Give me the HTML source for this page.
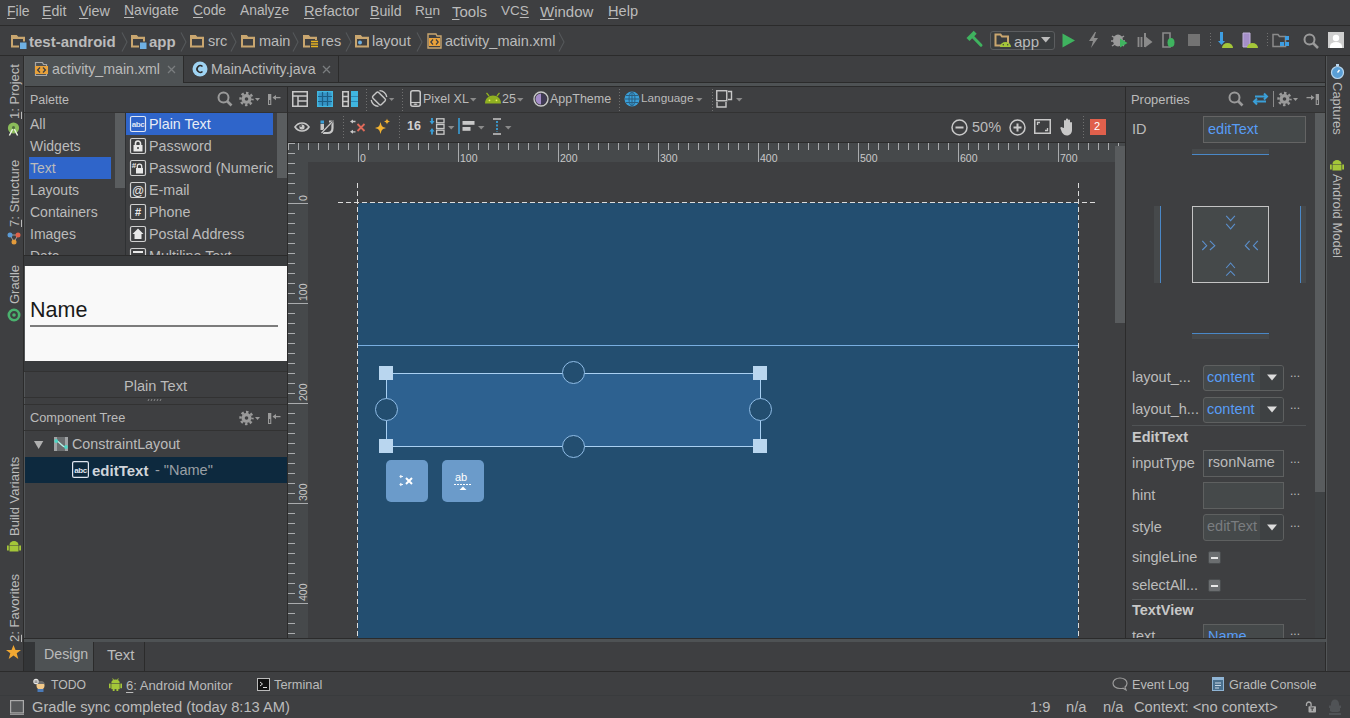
<!DOCTYPE html>
<html><head><meta charset="utf-8">
<style>
*{margin:0;padding:0;box-sizing:border-box}
html,body{width:1350px;height:718px;overflow:hidden;background:#3e3f41;font-family:"Liberation Sans",sans-serif;color:#bbbbbb}
.a{position:absolute}
.t{position:absolute;white-space:nowrap;line-height:1}
.hl{position:absolute;height:1px;background:#2b2b2b}
.vl{position:absolute;width:1px;background:#2b2b2b}
svg{position:absolute;overflow:visible}
u{text-decoration:underline;text-underline-offset:2px;text-decoration-thickness:1px}
</style></head><body>

<!-- ===== MENU BAR ===== -->
<div class="a" style="left:0;top:0;width:1350px;height:25px;background:#3e3f41"></div>
<div id="menu">
<div class="t" style="left:7px;top:4px;font-size:14.0px"><u>F</u>ile</div>
<div class="t" style="left:42px;top:4px;font-size:14.2px"><u>E</u>dit</div>
<div class="t" style="left:79px;top:4px;font-size:14.4px"><u>V</u>iew</div>
<div class="t" style="left:124px;top:4px;font-size:13.9px"><u>N</u>avigate</div>
<div class="t" style="left:193px;top:4px;font-size:13.8px"><u>C</u>ode</div>
<div class="t" style="left:240px;top:4px;font-size:13.8px">Analy<u>z</u>e</div>
<div class="t" style="left:304px;top:4px;font-size:14.6px"><u>R</u>efactor</div>
<div class="t" style="left:370px;top:4px;font-size:14.2px"><u>B</u>uild</div>
<div class="t" style="left:415px;top:4px;font-size:13.6px">R<u>u</u>n</div>
<div class="t" style="left:452px;top:4px;font-size:15.0px"><u>T</u>ools</div>
<div class="t" style="left:501px;top:4px;font-size:13.5px">VC<u>S</u></div>
<div class="t" style="left:540px;top:4px;font-size:15.0px"><u>W</u>indow</div>
<div class="t" style="left:608px;top:4px;font-size:14.6px"><u>H</u>elp</div>
</div>
<div class="hl" style="left:0;top:25px;width:1350px"></div>

<!-- ===== NAV BAR ===== -->
<div id="nav">
<!-- folder test-android -->
<svg style="left:10px;top:34px" width="17" height="15" viewBox="0 0 17 15"><path d="M1 1H6.8L8.3 2.8H15V13.5H1Z" fill="#c9a66f"/><rect x="3" y="5" width="10" height="6.5" fill="#3e3f41"/><rect x="9" y="7.5" width="7.5" height="7.5" fill="#3e3f41"/><rect x="10" y="8.5" width="6.5" height="6.5" fill="#6fb0e3"/></svg>
<div class="t" style="left:29px;top:34px;font-size:15px;font-weight:bold">test-android</div>
<svg style="left:121px;top:32px" width="7" height="20"><path d="M1 0.5L6 10L1 19.5" fill="none" stroke="#55585a" stroke-width="1.1"/></svg>
<svg style="left:130px;top:34px" width="17" height="15" viewBox="0 0 17 15"><path d="M1 1H6.8L8.3 2.8H15V13.5H1Z" fill="#c9a66f"/><rect x="3" y="5" width="10" height="6.5" fill="#3e3f41"/><rect x="9" y="7.5" width="7.5" height="7.5" fill="#3e3f41"/><rect x="10" y="8.5" width="6.5" height="6.5" fill="#6fb0e3"/></svg>
<div class="t" style="left:149px;top:34px;font-size:15px;font-weight:bold">app</div>
<svg style="left:180px;top:32px" width="7" height="20"><path d="M1 0.5L6 10L1 19.5" fill="none" stroke="#55585a" stroke-width="1.1"/></svg>
<svg style="left:189px;top:34px" width="17" height="15" viewBox="0 0 17 15"><path d="M1 1H6.8L8.3 2.8H15V13.5H1Z" fill="#c9a66f"/><rect x="3" y="5" width="10" height="6.5" fill="#3e3f41"/></svg>
<div class="t" style="left:208px;top:34px;font-size:14.5px">src</div>
<svg style="left:230px;top:32px" width="7" height="20"><path d="M1 0.5L6 10L1 19.5" fill="none" stroke="#55585a" stroke-width="1.1"/></svg>
<svg style="left:240px;top:34px" width="17" height="15" viewBox="0 0 17 15"><path d="M1 1H6.8L8.3 2.8H15V13.5H1Z" fill="#c9a66f"/><rect x="3" y="5" width="10" height="6.5" fill="#3e3f41"/></svg>
<div class="t" style="left:259px;top:34px;font-size:14.5px">main</div>
<svg style="left:292px;top:32px" width="7" height="20"><path d="M1 0.5L6 10L1 19.5" fill="none" stroke="#55585a" stroke-width="1.1"/></svg>
<svg style="left:302px;top:34px" width="17" height="15" viewBox="0 0 17 15"><path d="M1 1H6.8L8.3 2.8H15V13.5H1Z" fill="#c9a66f"/><rect x="3" y="5" width="10" height="6.5" fill="#3e3f41"/><rect x="8" y="6" width="8" height="9" fill="#3e3f41"/><path d="M9 7.5h7M9 10h7M9 12.5h7" stroke="#e6b422" stroke-width="1.6"/></svg>
<div class="t" style="left:321px;top:34px;font-size:14.5px">res</div>
<svg style="left:345px;top:32px" width="7" height="20"><path d="M1 0.5L6 10L1 19.5" fill="none" stroke="#55585a" stroke-width="1.1"/></svg>
<svg style="left:354px;top:34px" width="17" height="15" viewBox="0 0 17 15"><path d="M1 1H6.8L8.3 2.8H15V13.5H1Z" fill="#c9a66f"/><rect x="3" y="5" width="10" height="6.5" fill="#3e3f41"/><circle cx="6" cy="8.5" r="2" fill="#6fb0e3"/></svg>
<div class="t" style="left:372px;top:34px;font-size:14.5px">layout</div>
<svg style="left:416px;top:32px" width="7" height="20"><path d="M1 0.5L6 10L1 19.5" fill="none" stroke="#55585a" stroke-width="1.1"/></svg>
<svg style="left:427px;top:33px" width="15" height="16" viewBox="0 0 15 16"><path d="M1 1h8l1 2h4v12h-13z" fill="#3e3f41" stroke="#c9a66f" stroke-width="1.4"/><rect x="2" y="5" width="11" height="8" fill="#e9a23b"/><path d="M6 6.5L3.8 9L6 11.5M9 6.5L11.2 9L9 11.5" fill="none" stroke="#3e3f41" stroke-width="1.2"/></svg>
<div class="t" style="left:445px;top:34px;font-size:14.5px">activity_main.xml</div>
<svg style="left:558px;top:32px" width="7" height="20"><path d="M1 0.5L6 10L1 19.5" fill="none" stroke="#55585a" stroke-width="1.1"/></svg>

<!-- right toolbar -->
<svg style="left:966px;top:31px" width="18" height="17" viewBox="0 0 18 17"><path d="M2 8.5L9.2 1.3" stroke="#3fb35f" stroke-width="4.2"/><path d="M6 5L15 14.2" stroke="#3fb35f" stroke-width="3" stroke-linecap="round"/></svg>
<div class="a" style="left:990px;top:31px;width:65px;height:19px;border:1px solid #5b5d5f;border-radius:3px;background:#3a3d3f"></div>
<svg style="left:994px;top:33px" width="18" height="15" viewBox="0 0 18 15"><path d="M1.5 1.5h5l1.5 2h6v9h-12.5z" fill="none" stroke="#c9a66f" stroke-width="2"/><path d="M6 14a5 4.5 0 0 1 11 0z" fill="#a4c639"/><circle cx="9.3" cy="11.8" r="0.7" fill="#3e3f41"/><circle cx="13.7" cy="11.8" r="0.7" fill="#3e3f41"/></svg>
<div class="t" style="left:1014px;top:34px;font-size:15px">app</div>
<svg style="left:1041px;top:37px" width="10" height="6"><path d="M0 0h9.5L4.75 5.5z" fill="#bbbbbb"/></svg>
<svg style="left:1062px;top:33px" width="14" height="15"><path d="M0.5 0.5L13 7.5L0.5 14.5z" fill="#3fb35f"/></svg>
<svg style="left:1088px;top:32px" width="11" height="16"><path d="M7 0L1 9h4l-2 7l7-10h-4l2-6z" fill="#8c8c8c"/></svg>
<svg style="left:1111px;top:32px" width="17" height="16" viewBox="0 0 17 16"><ellipse cx="7" cy="8.5" rx="5" ry="6" fill="#9a9a9a"/><path d="M1 4l3 2M13 4l-3 2M0 9h3M14 9h-3M1 14l3-2M13 14l-3-2" stroke="#9a9a9a" stroke-width="1.5"/><path d="M9 6.5L16.5 11L9 15.5z" fill="#3fb35f"/></svg>
<svg style="left:1137px;top:33px" width="16" height="15" viewBox="0 0 16 15"><path d="M1.5 4v10M4.5 4v10" stroke="#8a8a8a" stroke-width="1.8"/><path d="M7 0h2v14h-2z" fill="#8a8a8a"/><path d="M8 3L15.5 9L8 14.5z" fill="#8a8a8a"/></svg>
<svg style="left:1162px;top:32px" width="14" height="16" viewBox="0 0 14 16"><path d="M1 1h7v14h-7z" fill="none" stroke="#8a8a8a" stroke-width="1.6"/><ellipse cx="9" cy="10.5" rx="3.5" ry="4.5" fill="#3fb35f"/></svg>
<div class="a" style="left:1188px;top:34px;width:12px;height:12px;background:#737373"></div>
<div class="a" style="left:1210px;top:33px;width:1px;height:15px;background:repeating-linear-gradient(to bottom,#707070 0 1px,transparent 1px 3px)"></div>
<svg style="left:1217px;top:32px" width="16" height="16" viewBox="0 0 16 16"><path d="M3 0h3v9h2l-3.5 4L1 9h2z" fill="#3e9ee2"/><path d="M5 16a5.5 5 0 0 1 11 0z" fill="#a4c639"/></svg>
<svg style="left:1242px;top:32px" width="16" height="16" viewBox="0 0 16 16"><path d="M1 1h7v14h-7z" fill="#a58fc9" stroke="#c1b3dc" stroke-width="1"/><path d="M5 16a5.5 5 0 0 1 11 0z" fill="#a4c639"/></svg>
<div class="a" style="left:1267px;top:33px;width:1px;height:15px;background:repeating-linear-gradient(to bottom,#707070 0 1px,transparent 1px 3px)"></div>
<svg style="left:1272px;top:33px" width="18" height="15" viewBox="0 0 18 15"><path d="M1 1.5h5l1.5 2h6v10h-12.5z" fill="none" stroke="#8a8a8a" stroke-width="1.5"/><rect x="13" y="3" width="4" height="4" fill="#3e9ee2"/><rect x="8" y="9" width="4" height="4" fill="#3e9ee2"/><rect x="13" y="9" width="4" height="4" fill="#3e9ee2"/></svg>
<svg style="left:1303px;top:33px" width="16" height="16" viewBox="0 0 16 16"><circle cx="6.5" cy="6.5" r="5" fill="none" stroke="#9a9a9a" stroke-width="2"/><path d="M10 10L15 15" stroke="#9a9a9a" stroke-width="2.5"/></svg>
<svg style="left:1328px;top:32px" width="16" height="16" viewBox="0 0 16 16"><rect width="16" height="16" fill="#cfcfcf"/><circle cx="8" cy="6" r="3.2" fill="#fff"/><path d="M2 16v-2a6 4 0 0 1 12 0v2z" fill="#fff"/></svg>
</div>
<div class="hl" style="left:0;top:55px;width:1350px"></div>

<!-- ===== TAB ROW ===== -->
<div id="tabs">
<div class="a" style="left:24px;top:82px;width:1302px;height:4px;background:#4e5254"></div>
<div class="hl" style="left:183px;top:82px;width:1143px;background:#2b2b2b"></div>
<div class="a" style="left:24px;top:56px;width:159px;height:27px;background:#4e5254"></div>
<div class="a" style="left:183px;top:56px;width:156px;height:27px;background:#3e3f41;border-left:1px solid #2b2b2b;border-right:1px solid #2b2b2b;border-bottom:1px solid #2b2b2b"></div>
<svg style="left:34px;top:61px" width="15" height="16" viewBox="0 0 15 16"><path d="M1.5 1.5h7l1 2h3v11h-11z" fill="none" stroke="#a8a8a8" stroke-width="1.2"/><rect x="1" y="5" width="13" height="8" fill="#e9a23b"/><path d="M6 6.5L3.6 9L6 11.5M9 6.5L11.4 9L9 11.5" fill="none" stroke="#3e3f41" stroke-width="1.3"/></svg>
<div class="t" style="left:52px;top:62px;font-size:14.2px">activity_main.xml</div>
<svg style="left:167px;top:65px" width="9" height="9"><path d="M1 1L8 8M8 1L1 8" stroke="#7a7d7f" stroke-width="1.3"/></svg>
<svg style="left:192px;top:61px" width="16" height="16" viewBox="0 0 16 16"><circle cx="8" cy="8" r="7.5" fill="#9fd3f2"/><path d="M10.5 5.5a3.3 3.3 0 1 0 0 5" fill="none" stroke="#2b2b2b" stroke-width="1.6"/></svg>
<div class="t" style="left:211px;top:62px;font-size:14.2px">MainActivity.java</div>
<svg style="left:322px;top:65px" width="9" height="9"><path d="M1 1L8 8M8 1L1 8" stroke="#7a7d7f" stroke-width="1.3"/></svg>
<div class="hl" style="left:24px;top:86px;width:1302px;background:#2b2b2b"></div>
</div>

<!-- ===== LEFT STRIP ===== -->
<div id="lstrip">
<div class="vl" style="left:23px;top:56px;height:616px;background:#2b2b2b"></div><div class="vl" style="left:24px;top:56px;height:616px;background:#535658"></div>
<div class="t" style="left:8px;top:119px;font-size:13px;transform:rotate(-90deg);transform-origin:0 0"><u>1</u>: Project</div>
<svg style="left:7px;top:121px" width="14" height="16" viewBox="0 0 14 16"><circle cx="6.5" cy="7" r="5.6" fill="#8bbd5a"/><circle cx="6.5" cy="6.5" r="1.5" fill="#4f6b40"/><path d="M5.6 8.2L2.4 14.5M7.4 8.2L10.6 14.5" stroke="#eef3e6" stroke-width="1.4"/></svg>
<div class="t" style="left:8px;top:227px;font-size:13px;transform:rotate(-90deg);transform-origin:0 0"><u>7</u>: Structure</div>
<svg style="left:7px;top:231px" width="14" height="14" viewBox="0 0 14 14"><path d="M3 4L11 4L7 11z" fill="none" stroke="#9a9a9a" stroke-width="1"/><circle cx="3" cy="4" r="2.5" fill="#5b9bd5"/><circle cx="11" cy="4" r="2.5" fill="#e0624a"/><circle cx="7" cy="11" r="2.5" fill="#e39b3b"/></svg>
<div class="t" style="left:8px;top:304px;font-size:13px;transform:rotate(-90deg);transform-origin:0 0">Gradle</div>
<svg style="left:7px;top:308px" width="14" height="14" viewBox="0 0 14 14"><circle cx="7" cy="7" r="5.2" fill="none" stroke="#4ab16e" stroke-width="2.6"/><circle cx="7" cy="7" r="1.8" fill="#4ab16e"/></svg>
<div class="t" style="left:8px;top:536px;font-size:13px;transform:rotate(-90deg);transform-origin:0 0">Build Variants</div>
<svg style="left:7px;top:539px" width="14" height="14" viewBox="0 0 14 14"><path d="M2.5 6a4.5 4 0 0 1 9 0z" fill="#a4c639"/><rect x="2.5" y="6.5" width="9" height="6" fill="#a4c639"/><rect x="0" y="6.5" width="1.8" height="5" fill="#a4c639"/><rect x="12.2" y="6.5" width="1.8" height="5" fill="#a4c639"/></svg>
<div class="t" style="left:8px;top:642px;font-size:13px;transform:rotate(-90deg);transform-origin:0 0"><u>2</u>: Favorites</div>
<svg style="left:6px;top:645px" width="15" height="14" viewBox="0 0 15 14"><path d="M7.5 0L9.5 5H15L10.7 8.3L12.3 14L7.5 10.5L2.7 14L4.3 8.3L0 5H5.5z" fill="#f0a732"/></svg>
</div>

<!-- ===== PALETTE ===== -->
<div id="palette">
<div class="vl" style="left:287px;top:87px;height:553px;background:#2b2b2b"></div>
<div class="t" style="left:30px;top:94px;font-size:12.5px">Palette</div>
<svg style="left:217px;top:91px" width="16" height="16" viewBox="0 0 16 16"><circle cx="6.5" cy="6.5" r="5" fill="none" stroke="#9a9a9a" stroke-width="2"/><path d="M10 10L14.5 14.5" stroke="#9a9a9a" stroke-width="2.6"/></svg>
<svg style="left:239px;top:91px" width="22" height="16" viewBox="0 0 22 16"><g transform="translate(7.5 8)"><circle r="5" fill="#9a9a9a"/><circle r="6" fill="none" stroke="#9a9a9a" stroke-width="2.4" stroke-dasharray="2.5 2.2124" stroke-dashoffset="1.25"/><circle r="1.8" fill="#3e3f41"/></g><path d="M16 7h5l-2.5 3z" fill="#9a9a9a"/></svg>
<svg style="left:268px;top:92px" width="14" height="14" viewBox="0 0 14 14"><rect x="0" y="2" width="3.3" height="11" fill="#9a9a9a"/><rect x="1.1" y="8" width="1.1" height="4" fill="#3e3f41"/><path d="M5.5 5.6h7" stroke="#9a9a9a" stroke-width="1.3"/><path d="M4.5 5.6L8 3V8.2z" fill="#9a9a9a"/></svg>
<div class="hl" style="left:24px;top:112px;width:263px;background:#323232"></div>
<!-- categories -->
<div class="a" style="left:29px;top:157px;width:82px;height:22px;background:#2f65ca"></div>
<div class="t" style="left:30px;top:117px;font-size:14px">All</div>
<div class="t" style="left:30px;top:139px;font-size:14px">Widgets</div>
<div class="t" style="left:30px;top:161px;font-size:14px">Text</div>
<div class="t" style="left:30px;top:183px;font-size:14px">Layouts</div>
<div class="t" style="left:30px;top:205px;font-size:14px">Containers</div>
<div class="t" style="left:30px;top:227px;font-size:14px">Images</div>
<div class="a" style="left:25px;top:113px;width:100px;height:142px;overflow:hidden"><div class="t" style="left:5px;top:136px;font-size:14px">Date</div></div>
<div class="a" style="left:115px;top:113px;width:10px;height:75px;background:#5a5d5f"></div>
<div class="vl" style="left:125px;top:113px;height:142px;background:#2f3133"></div>
<!-- items -->
<div class="a" style="left:126px;top:113px;width:147px;height:22px;background:#2f65ca"></div>
<div class="a" style="left:115px;top:113px;width:172px;height:142px;overflow:hidden">
<svg style="left:15px;top:3px" width="16" height="16" viewBox="0 0 16 16"><rect x="0.5" y="0.5" width="15" height="15" rx="1.5" fill="none" stroke="#dfe6f5" stroke-width="1.2"/><text x="8" y="11" font-size="8" font-weight="bold" letter-spacing="-0.4" font-family="Liberation Sans" fill="#dfe6f5" text-anchor="middle">abc</text></svg>
<div class="t" style="left:34px;top:4px;font-size:14.3px;color:#e8ecf5">Plain Text</div>
<svg style="left:15px;top:25px" width="16" height="16" viewBox="0 0 16 16"><rect x="0.5" y="0.5" width="15" height="15" rx="1.5" fill="none" stroke="#d0d0d0" stroke-width="1.2"/><rect x="3.5" y="7" width="9" height="6.5" fill="#e8e8e8"/><circle cx="8" cy="10" r="1" fill="#3e3f41"/><path d="M5.5 7V5.5a2.5 2.5 0 0 1 5 0V7" fill="none" stroke="#e8e8e8" stroke-width="1.6"/></svg>
<div class="t" style="left:34px;top:26px;font-size:14.3px">Password</div>
<svg style="left:15px;top:47px" width="16" height="16" viewBox="0 0 16 16"><rect x="0.5" y="0.5" width="15" height="15" rx="1.5" fill="none" stroke="#d0d0d0" stroke-width="1.2"/><rect x="6" y="8" width="7" height="5.5" fill="#e8e8e8"/><path d="M7.3 8V6.3a2.2 2.2 0 0 1 4.4 0V8" fill="none" stroke="#e8e8e8" stroke-width="1.3"/><text x="4" y="7.5" font-size="8" font-family="Liberation Sans" font-weight="bold" fill="#e8e8e8" text-anchor="middle">#</text></svg>
<div class="t" style="left:34px;top:48px;font-size:14.3px">Password (Numeric)</div>
<svg style="left:15px;top:69px" width="16" height="16" viewBox="0 0 16 16"><rect x="0.5" y="0.5" width="15" height="15" rx="1.5" fill="none" stroke="#d0d0d0" stroke-width="1.2"/><text x="8" y="12.5" font-size="12" font-family="Liberation Sans" fill="#e8e8e8" text-anchor="middle">@</text></svg>
<div class="t" style="left:34px;top:70px;font-size:14.3px">E-mail</div>
<svg style="left:15px;top:91px" width="16" height="16" viewBox="0 0 16 16"><rect x="0.5" y="0.5" width="15" height="15" rx="1.5" fill="none" stroke="#d0d0d0" stroke-width="1.2"/><text x="8" y="12" font-size="11" font-family="Liberation Sans" font-weight="bold" fill="#e8e8e8" text-anchor="middle">#</text></svg>
<div class="t" style="left:34px;top:92px;font-size:14.3px">Phone</div>
<svg style="left:15px;top:113px" width="16" height="16" viewBox="0 0 16 16"><rect x="0.5" y="0.5" width="15" height="15" rx="1.5" fill="none" stroke="#d0d0d0" stroke-width="1.2"/><path d="M8 2.5L2.5 8H4.5V13H11.5V8H13.5z" fill="#e8e8e8"/></svg>
<div class="t" style="left:34px;top:114px;font-size:14.3px">Postal Address</div>
<svg style="left:15px;top:135px" width="16" height="16" viewBox="0 0 16 16"><rect x="0.5" y="0.5" width="15" height="15" rx="1.5" fill="none" stroke="#d0d0d0" stroke-width="1.2"/><rect x="3" y="3" width="10" height="2" fill="#e8e8e8"/></svg>
<div class="t" style="left:34px;top:136px;font-size:14.3px">Multiline Text</div>
<div class="a" style="left:158px;top:0;width:14px;height:142px;background:#3e3f41"></div>
<div class="a" style="left:162px;top:0;width:10px;height:65px;background:#5a5d5f"></div>
</div>
<div class="hl" style="left:24px;top:255px;width:263px;background:#2b2b2b"></div>
<div class="a" style="left:24px;top:256px;width:263px;height:10px;background:#393b3d"></div>
<!-- preview -->
<div class="a" style="left:25px;top:266px;width:262px;height:95px;background:#f9f9f9"></div>
<div class="t" style="left:30px;top:300px;font-size:21.5px;color:#1a1a1a">Name</div>
<div class="a" style="left:30px;top:325px;width:248px;height:2px;background:#7c7c7c"></div>
<div class="a" style="left:24px;top:361px;width:263px;height:10px;background:#393b3d"></div>
<div class="hl" style="left:24px;top:371px;width:263px;background:#323232"></div>
<div class="t" style="left:124px;top:379px;font-size:14.6px">Plain Text</div>
<div class="hl" style="left:24px;top:397px;width:263px;background:#323232"></div>
<svg style="left:147px;top:398px" width="16" height="4"><path d="M1 3L2 1M4 3L5 1M7 3L8 1M10 3L11 1M13 3L14 1" stroke="#9a9a9a" stroke-width="0.8"/></svg>
<div class="hl" style="left:24px;top:404px;width:263px;background:#323232"></div>
<!-- component tree -->
<div class="t" style="left:30px;top:412px;font-size:12.8px">Component Tree</div>
<svg style="left:239px;top:410px" width="22" height="16" viewBox="0 0 22 16"><g transform="translate(7.5 8)"><circle r="5" fill="#9a9a9a"/><circle r="6" fill="none" stroke="#9a9a9a" stroke-width="2.4" stroke-dasharray="2.5 2.2124" stroke-dashoffset="1.25"/><circle r="1.8" fill="#3e3f41"/></g><path d="M16 7h5l-2.5 3z" fill="#9a9a9a"/></svg>
<svg style="left:268px;top:411px" width="14" height="14" viewBox="0 0 14 14"><rect x="0" y="2" width="3.3" height="11" fill="#9a9a9a"/><rect x="1.1" y="8" width="1.1" height="4" fill="#3e3f41"/><path d="M5.5 5.6h7" stroke="#9a9a9a" stroke-width="1.3"/><path d="M4.5 5.6L8 3V8.2z" fill="#9a9a9a"/></svg>
<div class="hl" style="left:24px;top:430px;width:263px;background:#323232"></div>
<svg style="left:34px;top:441px" width="10" height="8"><path d="M0 0h9.3L4.65 8z" fill="#b0b0b0"/></svg>
<svg style="left:54px;top:437px" width="14" height="14" viewBox="0 0 14 14"><rect width="14" height="14" fill="#6b6e70"/><rect width="3" height="14" fill="#a0a3a5"/><rect x="11" width="3" height="14" fill="#a0a3a5"/><path d="M2.2 4C6 4 7 10 12 10" fill="none" stroke="#b8efe6" stroke-width="1.3"/><circle cx="2.2" cy="4" r="1.9" fill="#4fd6c4"/><circle cx="12" cy="10" r="1.9" fill="#4fd6c4"/></svg>
<div class="t" style="left:72px;top:437px;font-size:14.3px">ConstraintLayout</div>
<div class="a" style="left:25px;top:457px;width:262px;height:26px;background:#0d293e"></div>
<svg style="left:72px;top:461px" width="17" height="17" viewBox="0 0 17 17"><rect x="0.6" y="0.6" width="15.8" height="15.8" rx="1.5" fill="none" stroke="#dfe6f0" stroke-width="1.2"/><text x="8.5" y="11.5" font-size="8" font-weight="bold" letter-spacing="-0.4" font-family="Liberation Sans" fill="#dfe6f0" text-anchor="middle">abc</text></svg>
<div class="t" style="left:92px;top:463px;font-size:15px;font-weight:bold;color:#d0d4da">editText</div>
<div class="t" style="left:155px;top:463px;font-size:14.5px;color:#9aa0a6">- "Name"</div>
</div>

<!-- ===== DESIGN ===== -->
<div id="design">
<div class="hl" style="left:288px;top:112px;width:837px;background:#323232"></div>
<!-- toolbar row 1 -->
<svg style="left:292px;top:91px" width="16" height="16" viewBox="0 0 16 16"><rect x="0.75" y="0.75" width="14.5" height="14.5" fill="none" stroke="#c8c8c8" stroke-width="1.5"/><path d="M1 5h14M6 5v10M6 10h9" stroke="#c8c8c8" stroke-width="1.5"/></svg>
<svg style="left:317px;top:91px" width="16" height="16" viewBox="0 0 16 16"><rect x="0" y="0" width="16" height="16" fill="#3592c4"/><rect x="0.75" y="0.75" width="14.5" height="14.5" fill="none" stroke="#40b6e0" stroke-width="1.5"/><path d="M5.5 1v14M10.5 1v14M1 5.5h14M1 10.5h14" stroke="#1b5f86" stroke-width="1.2"/></svg>
<svg style="left:342px;top:91px" width="16" height="16" viewBox="0 0 16 16"><rect x="0.75" y="0.75" width="5.5" height="14.5" fill="none" stroke="#c8c8c8" stroke-width="1.5"/><path d="M1 5.5h5M1 10.5h5" stroke="#c8c8c8" stroke-width="1.3"/><rect x="9" y="0" width="7" height="16" fill="#40b6e0"/><path d="M9 5.5h7M9 10.5h7" stroke="#2a88b8" stroke-width="1.2"/></svg>
<div class="a" style="left:366px;top:89px;width:1px;height:22px;background:repeating-linear-gradient(to bottom,#707070 0 1px,transparent 1px 3px)"></div>
<svg style="left:371px;top:90px" width="24" height="18" viewBox="0 0 24 18"><g transform="rotate(-45 8 8.5)"><rect x="4" y="2.5" width="8" height="12" rx="1.5" fill="none" stroke="#c8c8c8" stroke-width="1.4"/></g><path d="M8.5 0.7A8 8 0 0 1 15.8 7M7.5 16.3A8 8 0 0 1 0.2 10" fill="none" stroke="#c8c8c8" stroke-width="1.3"/><path d="M18 8h5.3l-2.65 3z" fill="#8a8a8a"/></svg>
<div class="a" style="left:402px;top:89px;width:1px;height:22px;background:repeating-linear-gradient(to bottom,#707070 0 1px,transparent 1px 3px)"></div>
<svg style="left:410px;top:90px" width="11" height="17" viewBox="0 0 11 17"><rect x="0.75" y="0.75" width="9.5" height="15.5" rx="2" fill="none" stroke="#c8c8c8" stroke-width="1.5"/><path d="M1 12.5h9" stroke="#c8c8c8" stroke-width="1.1"/><ellipse cx="5.5" cy="14.3" rx="2" ry="0.8" fill="#c8c8c8"/></svg>
<div class="t" style="left:423px;top:93px;font-size:12.5px">Pixel XL</div>
<svg style="left:470px;top:98px" width="7" height="4"><path d="M0 0h6.5L3.25 3.5z" fill="#8a8a8a"/></svg>
<svg style="left:484px;top:92px" width="18" height="12" viewBox="0 0 18 12"><path d="M2.5 0.8L5 4M15.5 0.8L13 4" stroke="#8fb021" stroke-width="1.3"/><path d="M1 11.5C1 6.5 4.5 3.5 9 3.5S17 6.5 17 11.5z" fill="#8fb021"/><circle cx="5.5" cy="8.3" r="0.9" fill="#f0f060"/><circle cx="12.5" cy="8.3" r="0.9" fill="#f0f060"/></svg>
<div class="t" style="left:502px;top:93px;font-size:12.5px">25</div>
<svg style="left:517px;top:98px" width="7" height="4"><path d="M0 0h6.5L3.25 3.5z" fill="#8a8a8a"/></svg>
<svg style="left:533px;top:91px" width="16" height="16" viewBox="0 0 16 16"><circle cx="8" cy="8" r="7" fill="none" stroke="#c8c8c8" stroke-width="1.4"/><path d="M8 2.5a5.5 5.5 0 0 0 0 11z" fill="#a48cc8"/><path d="M8 2.5a5.5 5.5 0 0 1 0 11z" fill="#403a55"/></svg>
<div class="t" style="left:550px;top:93px;font-size:12.5px">AppTheme</div>
<div class="a" style="left:619px;top:89px;width:1px;height:22px;background:repeating-linear-gradient(to bottom,#707070 0 1px,transparent 1px 3px)"></div>
<svg style="left:624px;top:91px" width="16" height="16" viewBox="0 0 16 16"><circle cx="8" cy="8" r="7.5" fill="#3a9fd8"/><g fill="none" stroke="#2b5e80" stroke-width="1"><ellipse cx="8" cy="8" rx="3" ry="7"/><path d="M1 8h14M2 4.5h12M2 11.5h12M8 1v14"/></g></svg>
<div class="t" style="left:641px;top:93px;font-size:11.8px">Language</div>
<svg style="left:696px;top:98px" width="7" height="4"><path d="M0 0h6.5L3.25 3.5z" fill="#8a8a8a"/></svg>
<div class="a" style="left:712px;top:89px;width:1px;height:22px;background:repeating-linear-gradient(to bottom,#707070 0 1px,transparent 1px 3px)"></div>
<svg style="left:716px;top:90px" width="18" height="18" viewBox="0 0 18 18"><rect x="0.75" y="0.75" width="10" height="10" fill="none" stroke="#c8c8c8" stroke-width="1.4"/><path d="M12 1.5h3.5v8h-3.5M1 12v5h9v-5" fill="none" stroke="#c8c8c8" stroke-width="1.4"/></svg>
<svg style="left:736px;top:98px" width="7" height="4"><path d="M0 0h6.5L3.25 3.5z" fill="#8a8a8a"/></svg>
<!-- toolbar row 2 -->
<svg style="left:294px;top:122px" width="16" height="10" viewBox="0 0 16 10"><path d="M1 5C3 2 5.5 1 8 1s5 1 7 4C13 8 10.5 9 8 9S3 8 1 5z" fill="none" stroke="#c8c8c8" stroke-width="1.6"/><circle cx="8" cy="5" r="2.6" fill="#c8c8c8"/><circle cx="7" cy="4" r="0.9" fill="#3e3f41"/></svg>
<svg style="left:320px;top:120px" width="14" height="14" viewBox="0 0 14 14"><rect x="0.5" y="0.5" width="3.5" height="3" fill="#3a9fd8"/><path d="M0.5 4h3.5v6h-3.5z" fill="#c8c8c8"/><path d="M9 1.5h3.5V8c0 3-2 5-5 5H3" fill="none" stroke="#c8c8c8" stroke-width="2.2"/><path d="M1 13.5L13 1" stroke="#3e3f41" stroke-width="2.2"/><path d="M1.5 13L12.5 1.5" stroke="#c8c8c8" stroke-width="1.2"/></svg>
<div class="a" style="left:343px;top:116px;width:1px;height:22px;background:repeating-linear-gradient(to bottom,#707070 0 1px,transparent 1px 3px)"></div>
<svg style="left:349px;top:119px" width="17" height="15" viewBox="0 0 17 15"><path d="M1 2.5L4 0.5V4.5zM1 12.8L4 10.8V14.8z" fill="#c8c8c8"/><path d="M3.5 2.5H6.5M3.5 12.8H6.5" stroke="#c8c8c8" stroke-width="1.3"/><path d="M8.5 5L15.5 12M15.5 5L8.5 12" stroke="#e06a5a" stroke-width="1.8"/></svg>
<svg style="left:374px;top:118px" width="17" height="17" viewBox="0 0 17 17"><path d="M6.5 4C7.5 8 8 9 12 10C8 11 7.5 12 6.5 16C5.5 12 5 11 1 10C5 9 5.5 8 6.5 4z" fill="#f2b230"/><path d="M13 0.5C13.5 2.5 14 3 16 3.5C14 4 13.5 4.5 13 6.5C12.5 4.5 12 4 10 3.5C12 3 12.5 2.5 13 0.5z" fill="#f2b230"/></svg>
<div class="a" style="left:399px;top:116px;width:1px;height:22px;background:repeating-linear-gradient(to bottom,#707070 0 1px,transparent 1px 3px)"></div>
<div class="t" style="left:407px;top:120px;font-size:12.5px;font-weight:bold;color:#d0d0d0">16</div>
<svg style="left:429px;top:118px" width="16" height="17" viewBox="0 0 16 17"><path d="M0.5 3H5.5L3 6.5zM0.5 13.5H5.5L3 10z" fill="#3a9fd8"/><path d="M3 0v3.5M3 13v3.5" stroke="#3a9fd8" stroke-width="1.8"/><rect x="7.6" y="0.8" width="7.4" height="4" fill="none" stroke="#c8c8c8" stroke-width="1.3"/><rect x="7.6" y="6.5" width="7.4" height="4" fill="none" stroke="#c8c8c8" stroke-width="1.3"/><rect x="7.6" y="12.2" width="7.4" height="4" fill="none" stroke="#c8c8c8" stroke-width="1.3"/></svg>
<svg style="left:448px;top:126px" width="7" height="4"><path d="M0 0h6.5L3.25 3.5z" fill="#8a8a8a"/></svg>
<svg style="left:458px;top:118px" width="17" height="17" viewBox="0 0 17 17"><path d="M1 0v16" stroke="#3a9fd8" stroke-width="1.6"/><rect x="4.5" y="3" width="12" height="3.8" fill="#c8c8c8"/><rect x="4.5" y="9" width="8" height="3.8" fill="#c8c8c8"/></svg>
<svg style="left:478px;top:126px" width="7" height="4"><path d="M0 0h6.5L3.25 3.5z" fill="#8a8a8a"/></svg>
<svg style="left:492px;top:118px" width="10" height="17" viewBox="0 0 10 17"><path d="M1 1h8M1 16h8" stroke="#c8c8c8" stroke-width="1.6"/><path d="M5 3v11" stroke="#3a9fd8" stroke-width="1.8" stroke-dasharray="2 1.5"/></svg>
<svg style="left:505px;top:126px" width="7" height="4"><path d="M0 0h6.5L3.25 3.5z" fill="#8a8a8a"/></svg>
<svg style="left:951px;top:119px" width="17" height="17" viewBox="0 0 17 17"><circle cx="8.5" cy="8.5" r="7.5" fill="none" stroke="#c8c8c8" stroke-width="1.5"/><path d="M4.5 8.5h8" stroke="#c8c8c8" stroke-width="2"/></svg>
<div class="t" style="left:972px;top:120px;font-size:14.5px">50%</div>
<svg style="left:1009px;top:119px" width="17" height="17" viewBox="0 0 17 17"><circle cx="8.5" cy="8.5" r="7.5" fill="none" stroke="#c8c8c8" stroke-width="1.5"/><path d="M4.5 8.5h8M8.5 4.5v8" stroke="#c8c8c8" stroke-width="2"/></svg>
<svg style="left:1034px;top:119px" width="17" height="16" viewBox="0 0 17 16"><rect x="0.75" y="0.75" width="15.5" height="13.5" fill="none" stroke="#c8c8c8" stroke-width="1.5"/><path d="M3.5 6V3.5H6M13.5 9v2.5H11" fill="none" stroke="#c8c8c8" stroke-width="1.3"/></svg>
<svg style="left:1060px;top:118px" width="15" height="18" viewBox="0 0 15 18"><path d="M4 10V3a1 1 0 0 1 2 0V8V1.5a1 1 0 0 1 2 0V8V2.5a1 1 0 0 1 2 0V8.5V5a1 1 0 0 1 2 0V12c0 3-2 5.5-5 5.5c-2.5 0-3.5-1-5-3L0.5 10.5c-.5-.8.5-1.8 1.3-1.2z" fill="#c8c8c8"/></svg>
<div class="a" style="left:1083px;top:116px;width:1px;height:22px;background:repeating-linear-gradient(to bottom,#707070 0 1px,transparent 1px 3px)"></div>
<div class="a" style="left:1090px;top:119px;width:16px;height:16px;background:#e0604c"></div>
<div class="t" style="left:1094px;top:121px;font-size:11px;color:#fff">2</div>
<div class="hl" style="left:288px;top:142px;width:837px;background:#2b2b2b"></div>
<!-- rulers -->
<div class="a" style="left:288px;top:143px;width:837px;height:19px;background:#46494b"></div>
<div class="a" style="left:288px;top:143px;width:20px;height:497px;background:#46494b"></div>
<div class="a" style="left:288px;top:143px;width:7px;height:1px;background:#a9abad"></div>
<div class="a" style="left:288px;top:143px;width:1px;height:7px;background:#a9abad"></div>
<div class="a" style="left:298px;top:143px;width:1px;height:7px;background:#a9abad"></div>
<div class="a" style="left:308px;top:143px;width:1px;height:7px;background:#a9abad"></div>
<div class="a" style="left:318px;top:143px;width:1px;height:7px;background:#a9abad"></div>
<div class="a" style="left:328px;top:143px;width:1px;height:7px;background:#a9abad"></div>
<div class="a" style="left:338px;top:143px;width:1px;height:7px;background:#a9abad"></div>
<div class="a" style="left:348px;top:143px;width:1px;height:7px;background:#a9abad"></div>
<div class="a" style="left:358px;top:143px;width:1px;height:19px;background:#a9abad"></div>
<div class="t" style="left:360px;top:153px;font-size:10.5px;color:#c8c8c8">0</div>
<div class="a" style="left:368px;top:143px;width:1px;height:7px;background:#a9abad"></div>
<div class="a" style="left:378px;top:143px;width:1px;height:7px;background:#a9abad"></div>
<div class="a" style="left:388px;top:143px;width:1px;height:7px;background:#a9abad"></div>
<div class="a" style="left:398px;top:143px;width:1px;height:7px;background:#a9abad"></div>
<div class="a" style="left:408px;top:143px;width:1px;height:7px;background:#a9abad"></div>
<div class="a" style="left:418px;top:143px;width:1px;height:7px;background:#a9abad"></div>
<div class="a" style="left:428px;top:143px;width:1px;height:7px;background:#a9abad"></div>
<div class="a" style="left:438px;top:143px;width:1px;height:7px;background:#a9abad"></div>
<div class="a" style="left:448px;top:143px;width:1px;height:7px;background:#a9abad"></div>
<div class="a" style="left:458px;top:143px;width:1px;height:19px;background:#a9abad"></div>
<div class="t" style="left:460px;top:153px;font-size:10.5px;color:#c8c8c8">100</div>
<div class="a" style="left:468px;top:143px;width:1px;height:7px;background:#a9abad"></div>
<div class="a" style="left:478px;top:143px;width:1px;height:7px;background:#a9abad"></div>
<div class="a" style="left:488px;top:143px;width:1px;height:7px;background:#a9abad"></div>
<div class="a" style="left:498px;top:143px;width:1px;height:7px;background:#a9abad"></div>
<div class="a" style="left:508px;top:143px;width:1px;height:7px;background:#a9abad"></div>
<div class="a" style="left:518px;top:143px;width:1px;height:7px;background:#a9abad"></div>
<div class="a" style="left:528px;top:143px;width:1px;height:7px;background:#a9abad"></div>
<div class="a" style="left:538px;top:143px;width:1px;height:7px;background:#a9abad"></div>
<div class="a" style="left:548px;top:143px;width:1px;height:7px;background:#a9abad"></div>
<div class="a" style="left:558px;top:143px;width:1px;height:19px;background:#a9abad"></div>
<div class="t" style="left:560px;top:153px;font-size:10.5px;color:#c8c8c8">200</div>
<div class="a" style="left:568px;top:143px;width:1px;height:7px;background:#a9abad"></div>
<div class="a" style="left:578px;top:143px;width:1px;height:7px;background:#a9abad"></div>
<div class="a" style="left:588px;top:143px;width:1px;height:7px;background:#a9abad"></div>
<div class="a" style="left:598px;top:143px;width:1px;height:7px;background:#a9abad"></div>
<div class="a" style="left:608px;top:143px;width:1px;height:7px;background:#a9abad"></div>
<div class="a" style="left:618px;top:143px;width:1px;height:7px;background:#a9abad"></div>
<div class="a" style="left:628px;top:143px;width:1px;height:7px;background:#a9abad"></div>
<div class="a" style="left:638px;top:143px;width:1px;height:7px;background:#a9abad"></div>
<div class="a" style="left:648px;top:143px;width:1px;height:7px;background:#a9abad"></div>
<div class="a" style="left:658px;top:143px;width:1px;height:19px;background:#a9abad"></div>
<div class="t" style="left:660px;top:153px;font-size:10.5px;color:#c8c8c8">300</div>
<div class="a" style="left:668px;top:143px;width:1px;height:7px;background:#a9abad"></div>
<div class="a" style="left:678px;top:143px;width:1px;height:7px;background:#a9abad"></div>
<div class="a" style="left:688px;top:143px;width:1px;height:7px;background:#a9abad"></div>
<div class="a" style="left:698px;top:143px;width:1px;height:7px;background:#a9abad"></div>
<div class="a" style="left:708px;top:143px;width:1px;height:7px;background:#a9abad"></div>
<div class="a" style="left:718px;top:143px;width:1px;height:7px;background:#a9abad"></div>
<div class="a" style="left:728px;top:143px;width:1px;height:7px;background:#a9abad"></div>
<div class="a" style="left:738px;top:143px;width:1px;height:7px;background:#a9abad"></div>
<div class="a" style="left:748px;top:143px;width:1px;height:7px;background:#a9abad"></div>
<div class="a" style="left:758px;top:143px;width:1px;height:19px;background:#a9abad"></div>
<div class="t" style="left:760px;top:153px;font-size:10.5px;color:#c8c8c8">400</div>
<div class="a" style="left:768px;top:143px;width:1px;height:7px;background:#a9abad"></div>
<div class="a" style="left:778px;top:143px;width:1px;height:7px;background:#a9abad"></div>
<div class="a" style="left:788px;top:143px;width:1px;height:7px;background:#a9abad"></div>
<div class="a" style="left:798px;top:143px;width:1px;height:7px;background:#a9abad"></div>
<div class="a" style="left:808px;top:143px;width:1px;height:7px;background:#a9abad"></div>
<div class="a" style="left:818px;top:143px;width:1px;height:7px;background:#a9abad"></div>
<div class="a" style="left:828px;top:143px;width:1px;height:7px;background:#a9abad"></div>
<div class="a" style="left:838px;top:143px;width:1px;height:7px;background:#a9abad"></div>
<div class="a" style="left:848px;top:143px;width:1px;height:7px;background:#a9abad"></div>
<div class="a" style="left:858px;top:143px;width:1px;height:19px;background:#a9abad"></div>
<div class="t" style="left:860px;top:153px;font-size:10.5px;color:#c8c8c8">500</div>
<div class="a" style="left:868px;top:143px;width:1px;height:7px;background:#a9abad"></div>
<div class="a" style="left:878px;top:143px;width:1px;height:7px;background:#a9abad"></div>
<div class="a" style="left:888px;top:143px;width:1px;height:7px;background:#a9abad"></div>
<div class="a" style="left:898px;top:143px;width:1px;height:7px;background:#a9abad"></div>
<div class="a" style="left:908px;top:143px;width:1px;height:7px;background:#a9abad"></div>
<div class="a" style="left:918px;top:143px;width:1px;height:7px;background:#a9abad"></div>
<div class="a" style="left:928px;top:143px;width:1px;height:7px;background:#a9abad"></div>
<div class="a" style="left:938px;top:143px;width:1px;height:7px;background:#a9abad"></div>
<div class="a" style="left:948px;top:143px;width:1px;height:7px;background:#a9abad"></div>
<div class="a" style="left:958px;top:143px;width:1px;height:19px;background:#a9abad"></div>
<div class="t" style="left:960px;top:153px;font-size:10.5px;color:#c8c8c8">600</div>
<div class="a" style="left:968px;top:143px;width:1px;height:7px;background:#a9abad"></div>
<div class="a" style="left:978px;top:143px;width:1px;height:7px;background:#a9abad"></div>
<div class="a" style="left:988px;top:143px;width:1px;height:7px;background:#a9abad"></div>
<div class="a" style="left:998px;top:143px;width:1px;height:7px;background:#a9abad"></div>
<div class="a" style="left:1008px;top:143px;width:1px;height:7px;background:#a9abad"></div>
<div class="a" style="left:1018px;top:143px;width:1px;height:7px;background:#a9abad"></div>
<div class="a" style="left:1028px;top:143px;width:1px;height:7px;background:#a9abad"></div>
<div class="a" style="left:1038px;top:143px;width:1px;height:7px;background:#a9abad"></div>
<div class="a" style="left:1048px;top:143px;width:1px;height:7px;background:#a9abad"></div>
<div class="a" style="left:1058px;top:143px;width:1px;height:19px;background:#a9abad"></div>
<div class="t" style="left:1060px;top:153px;font-size:10.5px;color:#c8c8c8">700</div>
<div class="a" style="left:1068px;top:143px;width:1px;height:7px;background:#a9abad"></div>
<div class="a" style="left:1078px;top:143px;width:1px;height:7px;background:#a9abad"></div>
<div class="a" style="left:1088px;top:143px;width:1px;height:7px;background:#a9abad"></div>
<div class="a" style="left:1098px;top:143px;width:1px;height:7px;background:#a9abad"></div>
<div class="a" style="left:1108px;top:143px;width:1px;height:7px;background:#a9abad"></div>
<div class="a" style="left:288px;top:153px;width:7px;height:1px;background:#a9abad"></div>
<div class="a" style="left:288px;top:163px;width:7px;height:1px;background:#a9abad"></div>
<div class="a" style="left:288px;top:173px;width:7px;height:1px;background:#a9abad"></div>
<div class="a" style="left:288px;top:183px;width:7px;height:1px;background:#a9abad"></div>
<div class="a" style="left:288px;top:193px;width:7px;height:1px;background:#a9abad"></div>
<div class="a" style="left:288px;top:203px;width:20px;height:1px;background:#a9abad"></div>
<div class="t" style="left:298px;top:201px;font-size:10.5px;color:#c8c8c8;transform:rotate(-90deg);transform-origin:0 0">0</div>
<div class="a" style="left:288px;top:213px;width:7px;height:1px;background:#a9abad"></div>
<div class="a" style="left:288px;top:223px;width:7px;height:1px;background:#a9abad"></div>
<div class="a" style="left:288px;top:233px;width:7px;height:1px;background:#a9abad"></div>
<div class="a" style="left:288px;top:243px;width:7px;height:1px;background:#a9abad"></div>
<div class="a" style="left:288px;top:253px;width:7px;height:1px;background:#a9abad"></div>
<div class="a" style="left:288px;top:263px;width:7px;height:1px;background:#a9abad"></div>
<div class="a" style="left:288px;top:273px;width:7px;height:1px;background:#a9abad"></div>
<div class="a" style="left:288px;top:283px;width:7px;height:1px;background:#a9abad"></div>
<div class="a" style="left:288px;top:293px;width:7px;height:1px;background:#a9abad"></div>
<div class="a" style="left:288px;top:303px;width:20px;height:1px;background:#a9abad"></div>
<div class="t" style="left:298px;top:301px;font-size:10.5px;color:#c8c8c8;transform:rotate(-90deg);transform-origin:0 0">100</div>
<div class="a" style="left:288px;top:313px;width:7px;height:1px;background:#a9abad"></div>
<div class="a" style="left:288px;top:323px;width:7px;height:1px;background:#a9abad"></div>
<div class="a" style="left:288px;top:333px;width:7px;height:1px;background:#a9abad"></div>
<div class="a" style="left:288px;top:343px;width:7px;height:1px;background:#a9abad"></div>
<div class="a" style="left:288px;top:353px;width:7px;height:1px;background:#a9abad"></div>
<div class="a" style="left:288px;top:363px;width:7px;height:1px;background:#a9abad"></div>
<div class="a" style="left:288px;top:373px;width:7px;height:1px;background:#a9abad"></div>
<div class="a" style="left:288px;top:383px;width:7px;height:1px;background:#a9abad"></div>
<div class="a" style="left:288px;top:393px;width:7px;height:1px;background:#a9abad"></div>
<div class="a" style="left:288px;top:403px;width:20px;height:1px;background:#a9abad"></div>
<div class="t" style="left:298px;top:401px;font-size:10.5px;color:#c8c8c8;transform:rotate(-90deg);transform-origin:0 0">200</div>
<div class="a" style="left:288px;top:413px;width:7px;height:1px;background:#a9abad"></div>
<div class="a" style="left:288px;top:423px;width:7px;height:1px;background:#a9abad"></div>
<div class="a" style="left:288px;top:433px;width:7px;height:1px;background:#a9abad"></div>
<div class="a" style="left:288px;top:443px;width:7px;height:1px;background:#a9abad"></div>
<div class="a" style="left:288px;top:453px;width:7px;height:1px;background:#a9abad"></div>
<div class="a" style="left:288px;top:463px;width:7px;height:1px;background:#a9abad"></div>
<div class="a" style="left:288px;top:473px;width:7px;height:1px;background:#a9abad"></div>
<div class="a" style="left:288px;top:483px;width:7px;height:1px;background:#a9abad"></div>
<div class="a" style="left:288px;top:493px;width:7px;height:1px;background:#a9abad"></div>
<div class="a" style="left:288px;top:503px;width:20px;height:1px;background:#a9abad"></div>
<div class="t" style="left:298px;top:501px;font-size:10.5px;color:#c8c8c8;transform:rotate(-90deg);transform-origin:0 0">300</div>
<div class="a" style="left:288px;top:513px;width:7px;height:1px;background:#a9abad"></div>
<div class="a" style="left:288px;top:523px;width:7px;height:1px;background:#a9abad"></div>
<div class="a" style="left:288px;top:533px;width:7px;height:1px;background:#a9abad"></div>
<div class="a" style="left:288px;top:543px;width:7px;height:1px;background:#a9abad"></div>
<div class="a" style="left:288px;top:553px;width:7px;height:1px;background:#a9abad"></div>
<div class="a" style="left:288px;top:563px;width:7px;height:1px;background:#a9abad"></div>
<div class="a" style="left:288px;top:573px;width:7px;height:1px;background:#a9abad"></div>
<div class="a" style="left:288px;top:583px;width:7px;height:1px;background:#a9abad"></div>
<div class="a" style="left:288px;top:593px;width:7px;height:1px;background:#a9abad"></div>
<div class="a" style="left:288px;top:603px;width:20px;height:1px;background:#a9abad"></div>
<div class="t" style="left:298px;top:601px;font-size:10.5px;color:#c8c8c8;transform:rotate(-90deg);transform-origin:0 0">400</div>
<div class="a" style="left:288px;top:613px;width:7px;height:1px;background:#a9abad"></div>
<div class="a" style="left:288px;top:623px;width:7px;height:1px;background:#a9abad"></div>
<div class="a" style="left:288px;top:633px;width:7px;height:1px;background:#a9abad"></div>
<div class="a" style="left:1118px;top:143px;width:1px;height:7px;background:#a9abad"></div>
<!-- canvas -->
<div class="a" style="left:358px;top:203px;width:720px;height:435px;background:#234e70;border-top-left-radius:3px"></div>
<div class="a" style="left:358px;top:345px;width:720px;height:1px;background:#78aee0"></div>
<svg style="left:0;top:0" width="1350" height="638"><g stroke="#dcdcdc" stroke-width="1" stroke-dasharray="5 3"><path d="M357.5 183V638M1078.5 183V638M338 202.5H1096"/></g></svg>


<div class="a" style="left:386px;top:373px;width:375px;height:74px;background:#2d6190;border:1px solid #a9d0f2"></div>
<div class="a" style="left:562px;top:361px;width:23px;height:23px;border-radius:50%;background:#234e70;border:1px solid #8fbce6"></div>
<div class="a" style="left:562px;top:435px;width:23px;height:23px;border-radius:50%;background:#234e70;border:1px solid #8fbce6"></div>
<div class="a" style="left:375px;top:398px;width:23px;height:23px;border-radius:50%;background:#234e70;border:1px solid #8fbce6"></div>
<div class="a" style="left:749px;top:398px;width:23px;height:23px;border-radius:50%;background:#234e70;border:1px solid #8fbce6"></div>
<div class="a" style="left:379px;top:366px;width:14px;height:14px;background:#b9d6ef"></div>
<div class="a" style="left:753px;top:366px;width:14px;height:14px;background:#b9d6ef"></div>
<div class="a" style="left:379px;top:439px;width:14px;height:14px;background:#b9d6ef"></div>
<div class="a" style="left:753px;top:439px;width:14px;height:14px;background:#b9d6ef"></div>
<div class="a" style="left:386px;top:460px;width:42px;height:42px;border-radius:5px;background:#6b9bca"></div>
<div class="a" style="left:442px;top:460px;width:42px;height:42px;border-radius:5px;background:#6b9bca"></div>
<svg style="left:399px;top:473px" width="16" height="16" viewBox="0 0 16 16"><path d="M4 3.5H1M2.3 2.2L1 3.5L2.3 4.8M4 11.5H1M2.3 10.2L1 11.5L2.3 12.8" fill="none" stroke="#eef4fa" stroke-width="1.1"/><path d="M7 5L13 11M13 5L7 11" stroke="#ffffff" stroke-width="2"/></svg>
<div class="t" style="left:455px;top:472px;font-size:11px;color:#fff">ab</div>
<svg style="left:454px;top:483px" width="18" height="8"><path d="M0 1.5h18" stroke="#fff" stroke-width="1" stroke-dasharray="2 1"/><path d="M5.5 7L9 3.5L12.5 7z" fill="#fff"/></svg>
<!-- scrollbar -->
<div class="a" style="left:1115px;top:146px;width:10px;height:177px;background:#595c5e"></div>
<div class="vl" style="left:1125px;top:87px;height:553px;background:#2b2b2b"></div>
</div>


<!-- ===== PROPERTIES ===== -->
<div id="props">
<div class="t" style="left:1131px;top:94px;font-size:12.9px">Properties</div>
<svg style="left:1228px;top:91px" width="16" height="16" viewBox="0 0 16 16"><circle cx="6.5" cy="6.5" r="5" fill="none" stroke="#9a9a9a" stroke-width="2"/><path d="M10 10L14.5 14.5" stroke="#9a9a9a" stroke-width="2.6"/></svg>
<svg style="left:1252px;top:92px" width="17" height="14" viewBox="0 0 17 14"><path d="M3 4.5h12M12 1.5l3 3l-3 3M14 9.5H2M5 6.5l-3 3l3 3" fill="none" stroke="#3a9fd8" stroke-width="2"/></svg>
<div class="a" style="left:1273px;top:91px;width:1px;height:16px;background:#8a8a8a"></div>
<svg style="left:1277px;top:91px" width="22" height="16" viewBox="0 0 22 16"><g transform="translate(7.5 8)"><circle r="5" fill="#9a9a9a"/><circle r="6" fill="none" stroke="#9a9a9a" stroke-width="2.4" stroke-dasharray="2.5 2.2124" stroke-dashoffset="1.25"/><circle r="1.8" fill="#3e3f41"/></g><path d="M16 7h5l-2.5 3z" fill="#9a9a9a"/></svg>
<svg style="left:1305px;top:92px" width="14" height="14" viewBox="0 0 14 14"><rect x="10.7" y="2" width="3.3" height="11" fill="#9a9a9a"/><rect x="11.8" y="8" width="1.1" height="4" fill="#3e3f41"/><path d="M1.5 5.6h7" stroke="#9a9a9a" stroke-width="1.3"/><path d="M9.5 5.6L6 3V8.2z" fill="#9a9a9a"/></svg>
<div class="hl" style="left:1126px;top:112px;width:200px;background:#323232"></div>
<div class="a" style="left:1315px;top:113px;width:10px;height:526px;background:#3f4244"></div>
<div class="a" style="left:1315px;top:113px;width:10px;height:379px;background:#595c5e"></div>
<div class="t" style="left:1132px;top:122px;font-size:14.5px">ID</div>
<div class="a" style="left:1203px;top:116px;width:103px;height:27px;background:#45494a;border:1px solid #646464"></div>
<div class="t" style="left:1208px;top:122px;font-size:14.5px;color:#589df6">editText</div>
<!-- constraint widget -->
<div class="a" style="left:1192px;top:149px;width:77px;height:6px;background:#46494b"></div>
<div class="a" style="left:1192px;top:154px;width:77px;height:1px;background:#4a88c7"></div>
<div class="a" style="left:1192px;top:333px;width:77px;height:6px;background:#46494b"></div>
<div class="a" style="left:1192px;top:333px;width:77px;height:1px;background:#4a88c7"></div>
<div class="a" style="left:1154px;top:206px;width:7px;height:77px;background:#46494b"></div>
<div class="a" style="left:1160px;top:206px;width:1px;height:77px;background:#4a88c7"></div>
<div class="a" style="left:1300px;top:206px;width:6px;height:77px;background:#46494b"></div>
<div class="a" style="left:1300px;top:206px;width:1px;height:77px;background:#4a88c7"></div>
<div class="a" style="left:1192px;top:206px;width:77px;height:77px;background:#45494a;border:1px solid #c4c4c4"></div>
<svg style="left:1192px;top:206px" width="77" height="77"><g fill="none" stroke="#5b8fcc" stroke-width="1.1"><path d="M34.2 9.8L38.6 14.7L42.9 9.8M34.2 17.9L38.6 22.8L42.9 17.9"/><path d="M34.2 62L38.6 57L42.9 62M34.2 69.6L38.6 65.2L42.9 69.6"/><path d="M10.3 34.8L14.7 39.7L10.3 44M17.9 34.8L22.8 39.7L17.9 44"/><path d="M57.6 34.8L53.3 39.7L57.6 44M65.8 34.8L61.4 39.7L65.8 44"/></g></svg>
<!-- rows -->
<div class="t" style="left:1132px;top:370px;font-size:14.5px">layout_...</div>
<div class="a" style="left:1203px;top:365px;width:81px;height:26px;background:#45494a;border:1px solid #5e6060;border-radius:3px;overflow:hidden"><div class="a" style="left:56px;top:0;width:25px;height:26px;background:#3e4143"></div></div>
<div class="t" style="left:1207px;top:370px;font-size:14.5px;color:#589df6">content</div>
<svg style="left:1267px;top:374px" width="10" height="7"><path d="M0 0.5h10L5 6.5z" fill="#dcdcdc"/></svg>
<div class="t" style="left:1290px;top:367px;font-size:12px">...</div>
<div class="t" style="left:1132px;top:402px;font-size:14.5px">layout_h...</div>
<div class="a" style="left:1203px;top:397px;width:81px;height:26px;background:#45494a;border:1px solid #5e6060;border-radius:3px;overflow:hidden"><div class="a" style="left:56px;top:0;width:25px;height:26px;background:#3e4143"></div></div>
<div class="t" style="left:1207px;top:402px;font-size:14.5px;color:#589df6">content</div>
<svg style="left:1267px;top:406px" width="10" height="7"><path d="M0 0.5h10L5 6.5z" fill="#dcdcdc"/></svg>
<div class="t" style="left:1290px;top:399px;font-size:12px">...</div>
<div class="a" style="left:1132px;top:425px;width:174px;height:1px;background:#505355"></div>
<div class="t" style="left:1132px;top:430px;font-size:14.5px;font-weight:bold;color:#c8c8c8">EditText</div>
<div class="t" style="left:1132px;top:456px;font-size:14.5px">inputType</div>
<div class="a" style="left:1203px;top:450px;width:81px;height:27px;background:#3f4244;border:1px solid #5e6060"></div>
<div class="a" style="left:1204px;top:451px;width:79px;height:25px;overflow:hidden"><div class="t" style="left:4px;top:4px;font-size:14.5px">rsonName</div></div>
<div class="t" style="left:1290px;top:453px;font-size:12px">...</div>
<div class="t" style="left:1132px;top:488px;font-size:14.5px">hint</div>
<div class="a" style="left:1203px;top:482px;width:81px;height:27px;background:#45494a;border:1px solid #5e6060"></div>
<div class="t" style="left:1290px;top:485px;font-size:12px">...</div>
<div class="t" style="left:1132px;top:520px;font-size:14.5px">style</div>
<div class="a" style="left:1203px;top:514px;width:81px;height:27px;background:#45494a;border:1px solid #5e6060;border-radius:3px;overflow:hidden"><div class="a" style="left:56px;top:0;width:25px;height:27px;background:#3e4143"></div></div>
<div class="a" style="left:1204px;top:515px;width:55px;height:25px;overflow:hidden"><div class="t" style="left:3px;top:4px;font-size:14.5px;color:#7a7d80">editText</div></div>
<svg style="left:1267px;top:524px" width="10" height="7"><path d="M0 0.5h10L5 6.5z" fill="#dcdcdc"/></svg>
<div class="t" style="left:1290px;top:517px;font-size:12px">...</div>
<div class="t" style="left:1132px;top:550px;font-size:14.5px">singleLine</div>
<div class="a" style="left:1208px;top:551px;width:13px;height:13px;border-radius:2px;background:#6b6e70;border:1px solid #4a4d4f"></div>
<div class="a" style="left:1211px;top:557px;width:7px;height:2px;background:#e8e8e8"></div>
<div class="t" style="left:1132px;top:578px;font-size:14.5px">selectAll...</div>
<div class="a" style="left:1208px;top:579px;width:13px;height:13px;border-radius:2px;background:#6b6e70;border:1px solid #4a4d4f"></div>
<div class="a" style="left:1211px;top:585px;width:7px;height:2px;background:#e8e8e8"></div>
<div class="a" style="left:1132px;top:599px;width:174px;height:1px;background:#505355"></div>
<div class="t" style="left:1132px;top:603px;font-size:14.5px;font-weight:bold;color:#c8c8c8">TextView</div>
<div class="a" style="left:1126px;top:620px;width:189px;height:19px;overflow:hidden">
<div class="t" style="left:6px;top:9px;font-size:14.5px">text</div>
<div class="a" style="left:77px;top:4px;width:81px;height:27px;background:#45494a;border:1px solid #5e6060"></div>
<div class="t" style="left:82px;top:9px;font-size:14.5px;color:#589df6">Name</div>
<div class="t" style="left:164px;top:5px;font-size:12px">...</div>
</div>
</div>


<!-- ===== RIGHT STRIP ===== -->
<div id="rstrip">
<div class="vl" style="left:1325px;top:56px;height:616px;background:#2b2b2b"></div><div class="vl" style="left:1326px;top:56px;height:616px;background:#535658"></div>
<svg style="left:1330px;top:64px" width="15" height="15" viewBox="0 0 15 15"><circle cx="7.5" cy="8.5" r="6" fill="#5a9fd6" stroke="#b9d7ef" stroke-width="1.2"/><path d="M7.5 8.5L9.5 6" stroke="#fff" stroke-width="1.3"/><rect x="6" y="0" width="3" height="2" fill="#b9d7ef"/></svg>
<div class="t" style="left:1344px;top:82px;font-size:13px;transform:rotate(90deg);transform-origin:0 0">Captures</div>
<svg style="left:1330px;top:158px" width="14" height="14" viewBox="0 0 14 14"><path d="M2.5 6a4.5 4 0 0 1 9 0z" fill="#a4c639"/><rect x="2.5" y="6.5" width="9" height="6" fill="#a4c639"/><rect x="0" y="6.5" width="1.8" height="5" fill="#a4c639"/><rect x="12.2" y="6.5" width="1.8" height="5" fill="#a4c639"/></svg>
<div class="t" style="left:1344px;top:174px;font-size:13px;transform:rotate(90deg);transform-origin:0 0">Android Model</div>
</div>

<!-- ===== BOTTOM ===== -->
<div id="bottom">
<div class="hl" style="left:24px;top:638px;width:1302px;background:#2b2b2b"></div>
<div class="a" style="left:24px;top:639px;width:1302px;height:3px;background:#4e5254"></div>
<div class="a" style="left:24px;top:642px;width:11px;height:29px;background:#333537"></div>
<div class="a" style="left:35px;top:639px;width:58px;height:32px;background:#4e5254"></div>
<div class="a" style="left:93px;top:642px;width:52px;height:29px;background:#3e3f41;border-left:1px solid #2b2b2b;border-right:1px solid #2b2b2b"></div>
<div class="t" style="left:44px;top:647px;font-size:14.2px">Design</div>
<div class="t" style="left:107px;top:647px;font-size:15px">Text</div>
<div class="hl" style="left:0;top:671px;width:1350px;background:#2b2b2b"></div>
<!-- tool window buttons -->
<svg style="left:33px;top:678px" width="14" height="14" viewBox="0 0 14 14"><circle cx="7.5" cy="7.5" r="4" fill="#f2c98a"/><path d="M3.5 6a4 3 0 0 1 8 0z" fill="#6e6e6e"/><rect x="4.5" y="11" width="6" height="3" fill="#4a7ab8"/><circle cx="3" cy="3.5" r="2.7" fill="#e8e8e8"/><path d="M1.5 3h3M1.5 4.3h3" stroke="#555" stroke-width="0.7"/></svg>
<div class="t" style="left:51px;top:679px;font-size:12.2px">TODO</div>
<svg style="left:109px;top:678px" width="13" height="13" viewBox="0 0 14 14"><path d="M2.5 5.5a4.5 4 0 0 1 9 0z" fill="#a4c639"/><path d="M4 0.5l1 2M10 0.5l-1 2" stroke="#a4c639" stroke-width="1"/><rect x="2.5" y="6" width="9" height="6" fill="#a4c639"/><rect x="0" y="6" width="1.8" height="5" fill="#a4c639"/><rect x="12.2" y="6" width="1.8" height="5" fill="#a4c639"/><rect x="4" y="11" width="2" height="3" fill="#a4c639"/><rect x="8" y="11" width="2" height="3" fill="#a4c639"/></svg>
<div class="t" style="left:126px;top:679px;font-size:13.1px"><u>6</u>: Android Monitor</div>
<svg style="left:257px;top:678px" width="13" height="13" viewBox="0 0 13 13"><rect width="13" height="13" fill="#111"/><rect x="0.5" y="0.5" width="12" height="12" fill="none" stroke="#bbb" stroke-width="1"/><path d="M3 4l2.5 2L3 8M6 9.5h4" fill="none" stroke="#ddd" stroke-width="1"/></svg>
<div class="t" style="left:274px;top:679px;font-size:12.8px">Terminal</div>
<svg style="left:1112px;top:677px" width="16" height="14" viewBox="0 0 16 14"><path d="M8 1C4 1 1 3.3 1 6.3C1 9.3 4 11.5 8 11.5c1.2 0 2 0 3-.3L14 13l-1-3c1.3-1 2-2.2 2-3.7C15 3.3 12 1 8 1z" fill="none" stroke="#9a9a9a" stroke-width="1.2"/></svg>
<div class="t" style="left:1132px;top:679px;font-size:12.7px">Event Log</div>
<svg style="left:1212px;top:677px" width="12" height="14" viewBox="0 0 12 14"><rect x="0.5" y="0.5" width="11" height="13" fill="#4a6f8c" stroke="#8fb4d4" stroke-width="1"/><rect x="0.5" y="0.5" width="11" height="2.5" fill="#8fb4d4"/><path d="M3 6h6M3 8.5h6M3 11h4" stroke="#c8d8e6" stroke-width="1"/></svg>
<div class="t" style="left:1229px;top:679px;font-size:12.6px">Gradle Console</div>
<!-- status bar -->
<div class="hl" style="left:0;top:695px;width:1350px;background:#393b3d"></div>
<svg style="left:10px;top:700px" width="14" height="15" viewBox="0 0 14 15"><rect x="0.6" y="0.6" width="12.8" height="12.3" fill="#555759" stroke="#aaaaaa" stroke-width="1.2"/><path d="M0 14.3h14" stroke="#aaa" stroke-width="1"/></svg>
<div class="t" style="left:32px;top:700px;font-size:14.7px">Gradle sync completed (today 8:13 AM)</div>
<div class="t" style="left:1030px;top:700px;font-size:14.7px">1:9</div>
<div class="t" style="left:1066px;top:700px;font-size:14.7px">n/a</div>
<div class="t" style="left:1103px;top:700px;font-size:14.7px">n/a</div>
<div class="t" style="left:1134px;top:700px;font-size:14.7px">Context: &lt;no context&gt;</div>
<svg style="left:1305px;top:701px" width="12" height="12" viewBox="0 0 12 12"><path d="M1.5 5V3.3a2.3 2.3 0 0 1 4.6 0V5" fill="none" stroke="#aaa" stroke-width="1.3"/><rect x="3.5" y="5.2" width="7.5" height="6.3" rx="0.8" fill="#aaa"/><path d="M5.5 7h3.5M7.2 7v3" stroke="#3e3f41" stroke-width="1"/></svg>
<svg style="left:1328px;top:699px" width="14" height="16" viewBox="0 0 14 16"><path d="M3 5a4 4.5 0 0 1 8 0v2H3z" fill="#505356"/><rect x="1" y="6.5" width="12" height="2.5" fill="#505356"/><path d="M2 9h10v3l-2 1H4l-2-1z" fill="#505356"/><path d="M1 16v-2h12v2z" fill="#505356"/></svg>
</div>


</body></html>
